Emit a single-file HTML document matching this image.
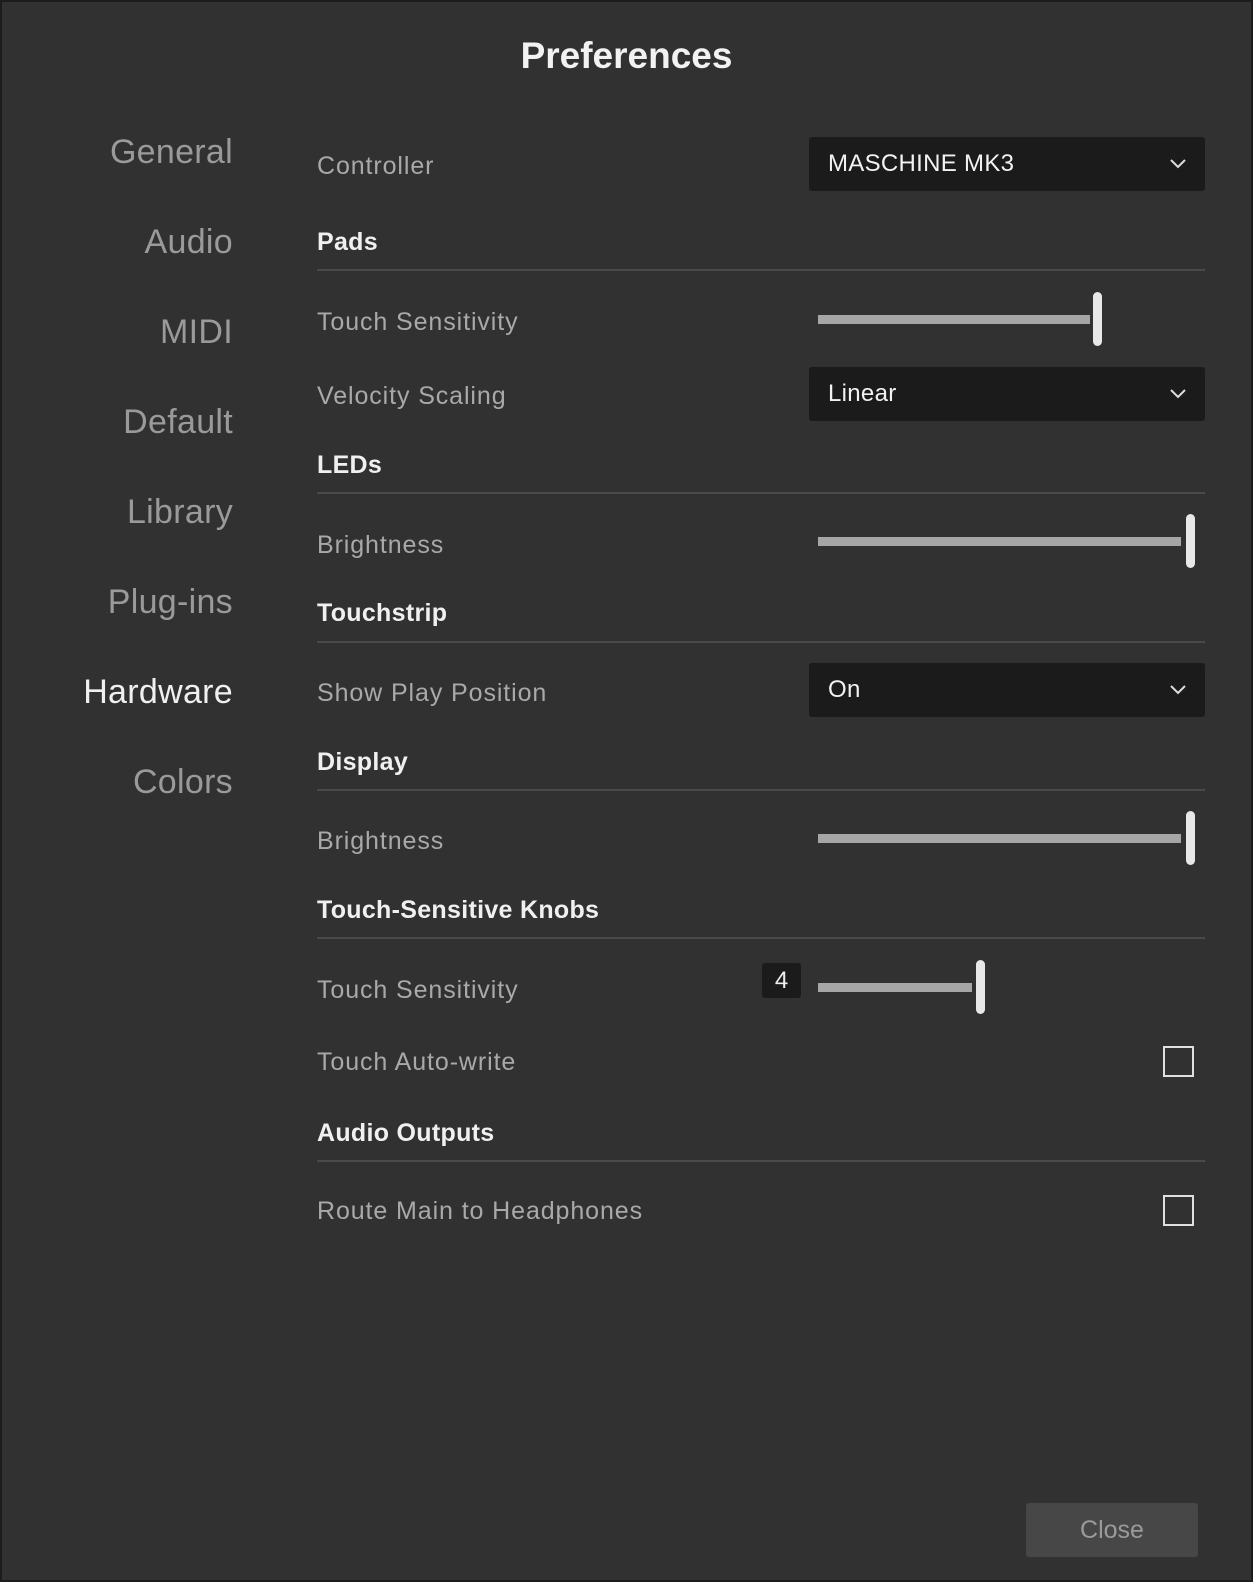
<!DOCTYPE html>
<html><head><meta charset="utf-8"><style>
*{margin:0;padding:0;box-sizing:border-box}
body{width:1253px;height:1582px;background:#1c1c1c;font-family:"Liberation Sans",sans-serif;overflow:hidden;position:relative}
.win{position:absolute;left:2px;top:2px;width:1249px;height:1578px;background:#313131}
.t{position:absolute;white-space:nowrap;line-height:40px;height:40px}
.nav{font-size:34px;color:#9a9a9a;right:1020px;text-align:right;letter-spacing:0.3px}
.lab{font-size:25px;color:#a9a9a9;left:317px;letter-spacing:0.9px}
.hd{font-size:25px;color:#f0f0f0;left:317px;letter-spacing:0.3px;font-weight:bold}
.line{position:absolute;left:317px;width:888px;height:2px;background:#4a4a4a}
.dd{position:absolute;left:809px;width:396px;height:54px;background:#1b1b1b;border-radius:3px;color:#f2f2f2;font-size:24px;line-height:54px;padding-left:19px;letter-spacing:0.3px}
.dd svg{position:absolute;right:18px;top:21px}
.trk{position:absolute;left:818px;height:9px;background:#a6a6a6}
.hdl{position:absolute;width:9px;height:54px;background:#e8e8e8;border-radius:5px}
.cb{position:absolute;left:1163px;width:31px;height:31px;border:2px solid #e0e0e0}
</style></head><body><div class="win"></div>
<div class="t" style="left:0;width:1253px;text-align:center;top:36px;font-size:37px;color:#f2f2f2;font-weight:bold">Preferences</div>
<div class="t nav" style="top:132px">General</div>
<div class="t nav" style="top:222px">Audio</div>
<div class="t nav" style="top:312px">MIDI</div>
<div class="t nav" style="top:402px">Default</div>
<div class="t nav" style="top:492px">Library</div>
<div class="t nav" style="top:582px">Plug-ins</div>
<div class="t nav" style="top:672px;color:#f0f0f0">Hardware</div>
<div class="t nav" style="top:762px">Colors</div>

<div class="t lab" style="top:146px">Controller</div>
<div class="dd" style="top:137px">MASCHINE MK3<svg width="18" height="11" viewBox="0 0 18 11"><path d="M2 2l7 7 7-7" fill="none" stroke="#ddd" stroke-width="2"/></svg></div>
<div class="t hd" style="top:222px">Pads</div>
<div class="line" style="top:269px"></div>
<div class="t lab" style="top:302px">Touch Sensitivity</div>
<div class="trk" style="top:315px;width:272px"></div><div class="hdl" style="left:1093px;top:292px"></div>
<div class="t lab" style="top:376px">Velocity Scaling</div>
<div class="dd" style="top:367px">Linear<svg width="18" height="11" viewBox="0 0 18 11"><path d="M2 2l7 7 7-7" fill="none" stroke="#ddd" stroke-width="2"/></svg></div>
<div class="t hd" style="top:445px">LEDs</div>
<div class="line" style="top:492px"></div>
<div class="t lab" style="top:525px">Brightness</div>
<div class="trk" style="top:537px;width:363px"></div><div class="hdl" style="left:1186px;top:514px"></div>
<div class="t hd" style="top:593px">Touchstrip</div>
<div class="line" style="top:641px"></div>
<div class="t lab" style="top:673px">Show Play Position</div>
<div class="dd" style="top:663px">On<svg width="18" height="11" viewBox="0 0 18 11"><path d="M2 2l7 7 7-7" fill="none" stroke="#ddd" stroke-width="2"/></svg></div>
<div class="t hd" style="top:742px">Display</div>
<div class="line" style="top:789px"></div>
<div class="t lab" style="top:821px">Brightness</div>
<div class="trk" style="top:834px;width:363px"></div><div class="hdl" style="left:1186px;top:811px"></div>
<div class="t hd" style="top:890px">Touch-Sensitive Knobs</div>
<div class="line" style="top:937px"></div>
<div class="t lab" style="top:970px">Touch Sensitivity</div>
<div style="position:absolute;left:762px;top:963px;width:39px;height:35px;background:#1b1b1b;border-radius:3px;color:#eee;font-size:24px;line-height:35px;text-align:center">4</div>
<div class="trk" style="top:983px;width:154px"></div><div class="hdl" style="left:976px;top:960px"></div>
<div class="t lab" style="top:1042px">Touch Auto-write</div>
<div class="cb" style="top:1046px"></div>
<div class="t hd" style="top:1113px">Audio Outputs</div>
<div class="line" style="top:1160px"></div>
<div class="t lab" style="top:1191px">Route Main to Headphones</div>
<div class="cb" style="top:1195px"></div>
<div style="position:absolute;left:1026px;top:1503px;width:172px;height:54px;background:#474747;border-radius:3px;color:#9a9a9a;font-size:25px;line-height:54px;text-align:center">Close</div>
</body></html>
